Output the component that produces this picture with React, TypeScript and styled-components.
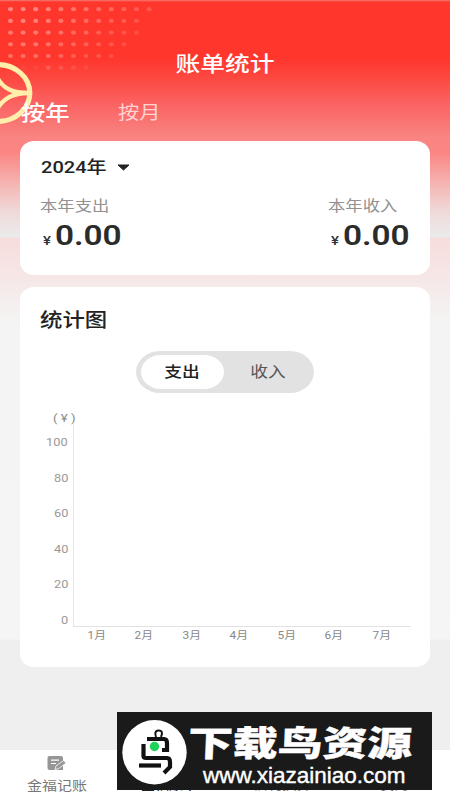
import React from 'react';
import styled, { createGlobalStyle } from 'styled-components';

const GlobalStyle = createGlobalStyle`
  * { box-sizing: border-box; }
  body { margin: 0; font-family: Roboto, 'Noto Sans CJK SC', sans-serif; }
`;

const Page = styled.div`
  position: relative;
  width: 450px;
  height: 800px;
  overflow: hidden;
  display: flex;
  flex-direction: column;
  background: linear-gradient(
    #f47a72 0, #ff362c 2px, #ff362c 58px, #fc4a43 80px, #fa6463 105px, #f98482 137px,
    #fa8583 152px, #f5b5b3 184px, #efdad9 212px, #ebebec 237px,
    #f7dcdc 238px, #f6e6e6 274px, #f5efef 304px, #f4f4f4 326px, #f5f5f5 639px, #efefef 640px
  );
`;

/* Wide lettering used throughout the app */
const Text = styled.span<{ $size: number; $color: string; $weight?: number; $wide?: number; $origin?: string }>`
  display: inline-block;
  white-space: nowrap;
  line-height: 1;
  font-size: ${p => p.$size}px;
  color: ${p => p.$color};
  font-weight: ${p => p.$weight ?? 400};
  transform: scaleX(${p => p.$wide ?? 1.18});
  transform-origin: ${p => p.$origin ?? 'left'} center;
`;

const Decoration = styled.svg`
  position: absolute;
  left: 0;
  top: 0;
`;

const TitleBar = styled.header`
  position: relative;
  height: 92px;
  padding-top: 54px;
  text-align: center;
`;

const Tabs = styled.nav`
  position: relative;
  height: 49px;
  display: flex;
  align-items: flex-start;
  gap: 55px;
  padding: 11px 0 0 21px;
`;

const Tab = styled.div`
  height: 20px;
  display: flex;
  align-items: center;
`;

const Card = styled.section<{ $height: number }>`
  position: relative;
  height: ${p => p.$height}px;
  margin: 0 20px 12px;
  padding: 17px 20px 0;
  border-radius: 14px / 13px;
  background: #fff;
`;

const CardHead = styled.div`
  height: 18px;
  display: flex;
  align-items: center;
  gap: 20px;
`;

const CardTitle = styled.h2`
  height: 30px;
  margin: 0;
  padding-top: 2px;
  display: flex;
  align-items: center;
`;

const YearLabel = styled.div`
  padding-left: 1px;
`;

const Totals = styled.div`
  display: flex;
  justify-content: space-between;
  margin-top: 20px;
`;

const Total = styled.div`
  width: 82px;
`;

const Amount = styled.div`
  display: flex;
  align-items: baseline;
  gap: 5px;
  margin: 7px 0 0 3px;
`;

const Switcher = styled.div`
  width: 178px;
  height: 42px;
  margin: 17px 0 0 96px;
  padding: 4px 5px;
  display: flex;
  border-radius: 24px / 21px;
  background: #e2e2e2;
`;

const Option = styled.div<{ $active?: boolean }>`
  flex: none;
  width: ${p => (p.$active ? 83 : 88)}px;
  display: flex;
  align-items: center;
  justify-content: center;
  border-radius: 20px / 17px;
  background: ${p => (p.$active ? '#fff' : 'transparent')};
`;

const Unit = styled.div`
  height: 0;
  padding-left: 13px;
  transform: translateY(16px);
  line-height: 1;
`;

const Chart = styled.div`
  display: grid;
  grid-template-columns: 33px 338px;
  grid-template-rows: 203px 20px;
  margin-top: 31px;
`;

const YAxis = styled.div`
  height: 203px;
  padding: 13px 5px 0 0;
  display: flex;
  flex-direction: column;
  align-items: flex-end;
  gap: 24.6px;
  line-height: 0;
`;

const Plot = styled.div`
  border-left: 1px solid #e6e6e6;
  border-bottom: 1px solid #e2e2e2;
`;

const XAxis = styled.div`
  grid-column: 2;
  display: grid;
  grid-template-columns: repeat(7, 47.5px);
  justify-items: center;
  padding-top: 4px;
`;

const BottomNav = styled.nav`
  height: 50px;
  margin-top: auto;
  display: grid;
  grid-template-columns: repeat(4, 112.5px);
  background: #fff;
`;

const NavItem = styled.div`
  display: flex;
  flex-direction: column;
  align-items: center;
  justify-content: flex-end;
  gap: 8px;
  padding: 0 0 8px 1px;
`;

const Banner = styled.aside`
  position: absolute;
  left: 117px;
  top: 712px;
  width: 315px;
  height: 78px;
  display: flex;
  padding: 8px 0 0 5px;
  background: #1a1a1a;
`;

const BannerWords = styled.div`
  display: flex;
  flex-direction: column;
  padding: 7px 0 0 1px;
`;

const BannerTitle = styled.div`
  height: 37px;
  line-height: 36px;
  font-size: 35px;
  font-weight: 900;
  white-space: nowrap;
  color: #fff;
  -webkit-text-stroke: 0.4px #fff;
  transform: scaleX(1.28) skewX(-2deg);
  transform-origin: left center;
`;

const BannerUrl = styled.div`
  padding-left: 15px;
  line-height: 24px;
  font-family: 'Liberation Sans', sans-serif;
  font-size: 22.5px;
  white-space: nowrap;
  color: #fff;
  -webkit-text-stroke: 0.4px #fff;
`;

const dots = [12, 11, 11, 10, 9, 7].flatMap((count, row) =>
  Array.from({ length: count }, (_, col) => ({
    x: 10.5 + col * 12.6,
    y: 9.2 + row * 11.7,
    o: Math.max(0.06, (row === 5 ? (col < 3 ? 0.06 : 0.24) : 0.52 - row * 0.035) - Math.max(0, col - 2) * 0.035),
  })),
);

function Backdrop() {
  return (
    <Decoration width="180" height="130" viewBox="0 0 180 130">
      {dots.map((d, i) => <ellipse key={i} cx={d.x} cy={d.y} rx="2.5" ry="2.1" fill="#ffd1c9" opacity={d.o} />)}
      <g fill="none" stroke="#ffefaa">
        <ellipse cx="-2.5" cy="93" rx="32.3" ry="28.5" strokeWidth="5.2" />
        <path d="M-3 77C3 89 13 93 29 93C13 93 3 98-4 111" strokeWidth="4.4" />
      </g>
    </Decoration>
  );
}

function Sum({ label }: { label: string }) {
  return (
    <Total>
      <Text $size={15} $color="#929292" $wide={1.155}>{label}</Text>
      <Amount>
        <Text $size={13} $color="#333" $weight={500} $wide={1.15}>¥</Text>
        <Text $size={28.5} $color="#2b2b2b" $weight={600} $wide={1.17}>0.00</Text>
      </Amount>
    </Total>
  );
}

export default function App() {
  return (
    <Page>
      <GlobalStyle />
      <Backdrop />
      <TitleBar>
        <Text $size={21} $color="#fff" $weight={500} $origin="center">账单统计</Text>
      </TitleBar>
      <Tabs>
        <Tab><Text $size={21} $color="#fff" $weight={500} $wide={1.16}>按年</Text></Tab>
        <Tab><Text $size={18.5} $color="#ffd3d2" $wide={1.15}>按月</Text></Tab>
      </Tabs>
      <Card $height={134}>
        <CardHead>
          <YearLabel><Text $size={17} $color="#222" $weight={500}>2024年</Text></YearLabel>
          <svg width="13" height="7" viewBox="0 0 13 7"><path d="M1 1H12L6.5 6Z" fill="#222" stroke="#222" strokeLinejoin="round" /></svg>
        </CardHead>
        <Totals>
          <Sum label="本年支出" />
          <Sum label="本年收入" />
        </Totals>
      </Card>
      <Card $height={380}>
        <CardTitle>
          <Text $size={19} $color="#222" $weight={500}>统计图</Text>
        </CardTitle>
        <Switcher>
          <Option $active><Text $size={15} $color="#222" $weight={500} $origin="center">支出</Text></Option>
          <Option><Text $size={15} $color="#555" $origin="center">收入</Text></Option>
        </Switcher>
        <Unit><Text $size={10.5} $color="#888" $wide={1.25}>( ¥ )</Text></Unit>
        <Chart>
          <YAxis>
            {[100, 80, 60, 40, 20, 0].map(n => <Text key={n} $size={11} $color="#999" $wide={1.16} $origin="right">{n}</Text>)}
          </YAxis>
          <Plot />
          <XAxis>
            {[1, 2, 3, 4, 5, 6, 7].map(m => <Text key={m} $size={10} $color="#888" $origin="center">{m}月</Text>)}
          </XAxis>
        </Chart>
      </Card>
      <BottomNav>
        <NavItem>
          <svg width="20" height="15" viewBox="0 0 20 15">
            <path d="M2.5 0H14Q16 0 16 2V14H2.5Q.5 14 .5 12V2Q.5 0 2.5 0Z" fill="#969696" />
            <path d="M4 4.2H12M4 7.5H9" stroke="#fff" strokeWidth="1.2" />
            <path d="M8 13.5L9 10L16.7 4.5L19.2 7L11.5 12.6Z" fill="#969696" stroke="#fff" strokeWidth=".8" />
          </svg>
          <Text $size={13} $color="#777" $wide={1.15} $origin="center">金福记账</Text>
        </NavItem>
        <NavItem><Text $size={12.5} $color="#222" $weight={500} $wide={1.12} $origin="center">金福账单</Text></NavItem>
        <NavItem><Text $size={12.5} $color="#777" $wide={1.18} $origin="center">福利换算</Text></NavItem>
        <NavItem><Text $size={12.5} $color="#777" $wide={1.15} $origin="center">我的</Text></NavItem>
      </BottomNav>
      <Banner>
        <svg width="65" height="65" viewBox="0 0 65 65">
          <circle cx="32.5" cy="32.3" r="32.2" fill="#fff" />
          <g fill="none" stroke="#111" strokeWidth="4.2">
            <path d="M34 17Q32 11 36 10.5Q42 10 39 17" strokeWidth="2" />
            <path d="M25 19H42Q45 19 45 23V30H40" />
            <path d="M21.500 24V36Q21.500 38 24 38H45Q48 38 48 42V47L42 53" />
            <path d="M17 45.500H39" />
          </g>
          <circle cx="32.5" cy="26.500" r="4.7" fill="#20d15a" />
        </svg>
        <BannerWords>
          <BannerTitle>下载鸟资源</BannerTitle>
          <BannerUrl>www.xiazainiao.com</BannerUrl>
        </BannerWords>
      </Banner>
    </Page>
  );
}
